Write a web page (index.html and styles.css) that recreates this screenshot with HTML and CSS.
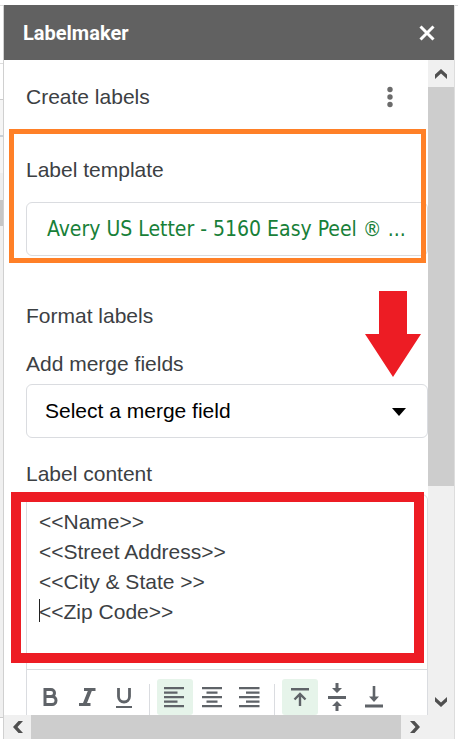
FILE: index.html
```html
<!DOCTYPE html>
<html lang="en">
<head>
    <meta charset="UTF-8">
    <meta name="viewport" content="width=device-width, initial-scale=1.0">
    <title>Labelmaker</title>
    <link rel="stylesheet" href="styles.css">
</head>
<body>

    <div class="sheet-left"></div>

    <div class="sidebar">
        <header class="titlebar">
            <h1>Labelmaker</h1>
            <button class="close-btn" aria-label="Close">
                <svg width="16" height="16" viewBox="0 0 16 16"><path d="M1.500 1.500L14.500 14.500M14.500 1.500L1.500 14.500" fill="none" stroke="#fff" stroke-width="3"/></svg>
            </button>
        </header>

        <main class="content">
            <div class="heading-row">
                <h2>Create labels</h2>
                <button class="menu-btn" aria-label="More options">
                    <svg width="6" height="22" viewBox="0 0 6 22" fill="#6b6b6b"><circle cx="3" cy="3.500" r="2.700"/><circle cx="3" cy="11" r="2.700"/><circle cx="3" cy="18.500" r="2.700"/></svg>
                </button>
            </div>

            <section class="template">
                <label for="template-btn">Label template</label>
                <button id="template-btn" class="template-btn">Avery US Letter - 5160 Easy Peel ® ...</button>
                <div class="mark mark-orange"></div>
            </section>

            <section class="merge">
                <h2>Format labels</h2>
                <label for="merge-field">Add merge fields</label>
                <div class="select-box">
                    <select id="merge-field">
                        <option>Select a merge field</option>
                    </select>
                    <svg class="caret" width="14" height="8" viewBox="0 0 14 8"><path d="M0 0H14L7 8Z"/></svg>
                </div>
                <svg class="arrow" width="56" height="86" viewBox="0 0 56 86"><path d="M14 0H42V43H56L28 86L0 43H14Z" fill="#ed1c24"/></svg>
            </section>

            <section class="editor">
                <label for="label-content">Label content</label>
                <div class="editor-box">
                    <div class="text-wrap">
                        <textarea id="label-content" spellcheck="false">&lt;&lt;Name&gt;&gt;
&lt;&lt;Street Address&gt;&gt;
&lt;&lt;City &amp; State &gt;&gt;
&lt;&lt;Zip Code&gt;&gt;</textarea>
                        <span class="cursor"></span>
                        <div class="mark mark-red"></div>
                    </div>
                    <div class="toolbar">
                        <button aria-label="Bold"><svg width="24" height="24" viewBox="0 0 24 24"><path d="M7 4.500H13A3.500 3.500 0 0 1 13 11.500H7ZM7 11.500H14A3.750 3.750 0 0 1 14 19.500H7Z" fill="none" stroke="#5f6368" stroke-width="3"/></svg></button>
                        <button aria-label="Italic"><svg width="24" height="24" viewBox="0 0 24 24"><path d="M9 3H20.500V6H16.800L12 18H15.500V21H4V18H8L12.800 6H9Z" fill="#5f6368"/></svg></button>
                        <button aria-label="Underline"><svg width="24" height="24" viewBox="0 0 24 24"><path d="M6.500 3V11.500A5.500 5.500 0 0 0 17.500 11.500V3" fill="none" stroke="#5f6368" stroke-width="2.800"/><path d="M4 21H20V23H4Z" fill="#5f6368"/></svg></button>
                        <span class="sep"></span>
                        <button class="active" aria-label="Align left"><svg width="24" height="24" viewBox="0 0 24 24"><path d="M1 2H21V4.200H1ZM1 6.500H14.500V8.700H1ZM1 11H21V13.200H1ZM1 15.500H14.500V17.700H1ZM1 20H21V22.200H1Z" fill="#5f6368"/></svg></button>
                        <button aria-label="Align center"><svg width="24" height="24" viewBox="0 0 24 24"><path d="M2 2H22V4.200H2ZM6.500 6.500H17.500V8.700H6.500ZM2 11H22V13.200H2ZM6.500 15.500H17.500V17.700H6.500ZM2 20H22V22.200H2Z" fill="#5f6368"/></svg></button>
                        <button aria-label="Align right"><svg width="24" height="24" viewBox="0 0 24 24"><path d="M2 2H22.500V4.200H2ZM9 6.500H22.500V8.700H9ZM2 11H22.500V13.200H2ZM9 15.500H22.500V17.700H9ZM2 20H22.500V22.200H2Z" fill="#5f6368"/></svg></button>
                        <span class="sep"></span>
                        <button class="active" aria-label="Align top"><svg width="24" height="24" viewBox="0 0 24 24"><path d="M3 3H21V5.500H3Z" fill="#5f6368"/><path d="M12 21V9.500M6.500 14.500L12 9L17.500 14.500" fill="none" stroke="#5f6368" stroke-width="2.400"/></svg></button>
                        <button aria-label="Align middle"><svg width="24" height="28" viewBox="0 0 24 28"><path d="M3 13H21V16H3ZM10.500 0H13.500V5H17L12 10L7 5H10.500ZM12 18L17 23H13.500V28H10.500V23H7Z" fill="#5f6368"/></svg></button>
                        <button aria-label="Align bottom"><svg width="24" height="24" viewBox="0 0 24 24"><path d="M3 19.500H21V22.500H3ZM10.700 1H13.300V11.500H17L12 17L7 11.500H10.700Z" fill="#5f6368"/></svg></button>
                    </div>
                </div>
            </section>
        </main>

        <div class="scroll-y">
            <button aria-label="Scroll up"><svg width="14" height="12" viewBox="0 0 14 12"><path d="M1 6.500L7 1L13 6.500V11L7 5.500L1 11Z" fill="#505050"/></svg></button>
            <div class="thumb-y"></div>
            <button aria-label="Scroll down"><svg width="14" height="12" viewBox="0 0 14 12"><path d="M1 1L7 6.500L13 1V5.500L7 11L1 5.500Z" fill="#505050"/></svg></button>
        </div>

        <div class="scroll-x">
            <button aria-label="Scroll left"><svg width="12" height="14" viewBox="0 0 12 14"><path d="M6.500 1H11L5.500 7L11 13H6.500L1 7Z" fill="#505050"/></svg></button>
            <div class="thumb-x"></div>
            <button aria-label="Scroll right"><svg width="12" height="14" viewBox="0 0 12 14"><path d="M1 1H5.500L11 7L5.500 13H1L6.500 7Z" fill="#505050"/></svg></button>
        </div>
    </div>

    <div class="sheet-right"></div>

</body>
</html>
```
FILE: styles.css
```css
* {
    box-sizing: border-box;
}
body {
    margin: 0;
    height: 100vh;
    overflow: hidden;
    display: flex;
    padding-top: 5px;
    font-family: "Liberation Sans", Arial, sans-serif;
    font-size: 21px;
    line-height: 24px;
    color: #3c4043;
    background-color: #fff;
}
h1, h2 {
    margin: 0;
    font-size: 21px;
    font-weight: normal;
}
button {
    border: none;
    padding: 0;
    background: none;
    cursor: pointer;
    display: flex;
    align-items: center;
    justify-content: center;
}
label {
    display: block;
}

/* sheet showing behind the sidebar */
.sheet-left {
    width: 4px;
    border-right: 1px solid #d0d0d0;
    background: linear-gradient(#ddd 1px, #fff 1px 58px, #ddd 58px 59px, #fff 59px 94px, #ccc 94px 95px, #f5f5f5 95px 130px, #c8d0d8 130px 132px, #f5f5f5 132px 168px, #eee 168px 195px, #c6c6c6 195px 221px, #f0f0f0 221px 712px, #ccc 712px 713px, #fff 713px);
}
.sheet-right {
    width: 4px;
    border-top: 1px solid #ddd;
    border-left: 1px solid #ddd;
}
.sidebar {
    flex: 1;
    min-width: 0;
    display: grid;
    grid-template-columns: 1fr 26px;
    grid-template-rows: 55px 1fr 24px;
    background-color: #fff;
}

.titlebar {
    grid-column: 1 / 3;
    display: flex;
    align-items: center;
    justify-content: space-between;
    padding: 0 19px;
    background-color: #616161;
    color: #fff;
}
.titlebar h1 {
    font-family: Roboto, sans-serif;
    font-size: 20px;
    font-weight: bold;
}

.content {
    min-width: 0;
    min-height: 0;
    overflow: hidden;
    padding: 25px 0 0 22px;
}
.heading-row {
    display: flex;
    justify-content: space-between;
    padding-right: 35px;
}
.template {
    position: relative;
    margin-top: 49px;
}
.template-btn {
    width: 100%;
    height: 54px;
    margin-top: 20px;
    padding: 0 20px;
    border: 1px solid #dadce0;
    border-radius: 6px;
    justify-content: flex-start;
    white-space: nowrap;
    font-family: "DejaVu Sans Condensed", "DejaVu Sans", sans-serif;
    font-size: 21px;
    color: #188038;
}
.merge {
    position: relative;
    margin-top: 48px;
}
.merge label {
    margin-top: 24px;
}
.select-box {
    position: relative;
    margin-top: 8px;
}
.select-box select {
    display: block;
    width: 100%;
    height: 54px;
    padding: 0 18px;
    border: 1px solid #dadce0;
    border-radius: 6px;
    appearance: none;
    background-color: #fff;
    color: #000;
    font: inherit;
}
.caret {
    position: absolute;
    right: 22px;
    top: 24px;
    pointer-events: none;
}

.editor {
    margin-top: 24px;
}
.editor-box {
    margin-top: 8px;
    border: 1px solid #dadce0;
    border-radius: 6px;
}
.text-wrap {
    position: relative;
}
.text-wrap textarea {
    display: block;
    width: 100%;
    height: 175px;
    padding: 12px;
    border: none;
    border-bottom: 1px solid #dadce0;
    border-radius: 6px 6px 0 0;
    outline: none;
    resize: none;
    font: inherit;
    line-height: 30px;
    color: inherit;
}
.cursor {
    position: absolute;
    left: 12px;
    top: 104px;
    width: 1px;
    height: 23px;
    background-color: #222;
}
.toolbar {
    display: flex;
    gap: 1px;
    padding: 9px 0 9px 5px;
}
.toolbar button {
    flex: none;
    width: 36px;
    height: 36px;
    border-radius: 3px;
}
.toolbar .active {
    background-color: #e6f4ea;
}
.sep {
    width: 1px;
    margin: 5px 6px 0;
    background-color: #dadce0;
}

/* callouts drawn over the form */
.mark {
    position: absolute;
    pointer-events: none;
}
.mark-orange {
    top: -29px;
    right: 2px;
    bottom: -7px;
    left: -17px;
    border: 5px solid #ff8027;
}
.mark-red {
    top: -3px;
    right: 3px;
    bottom: 7px;
    left: -16px;
    border: 10px solid #ed1c24;
}
.arrow {
    position: absolute;
    top: -13px;
    right: 7px;
}

.scroll-y {
    display: flex;
    flex-direction: column;
    background-color: #f0f0f0;
}
.scroll-y button {
    height: 27px;
}
.thumb-y {
    flex: 0 1 399px;
    margin-bottom: auto;
    background-color: #cdcdcd;
}
.scroll-x {
    grid-column: 1 / 3;
    display: flex;
    padding-right: 26px;
    background-color: #f0f0f0;
}
.scroll-x button {
    width: 27px;
}
.thumb-x {
    flex: 1;
    background-color: #cdcdcd;
}
```
